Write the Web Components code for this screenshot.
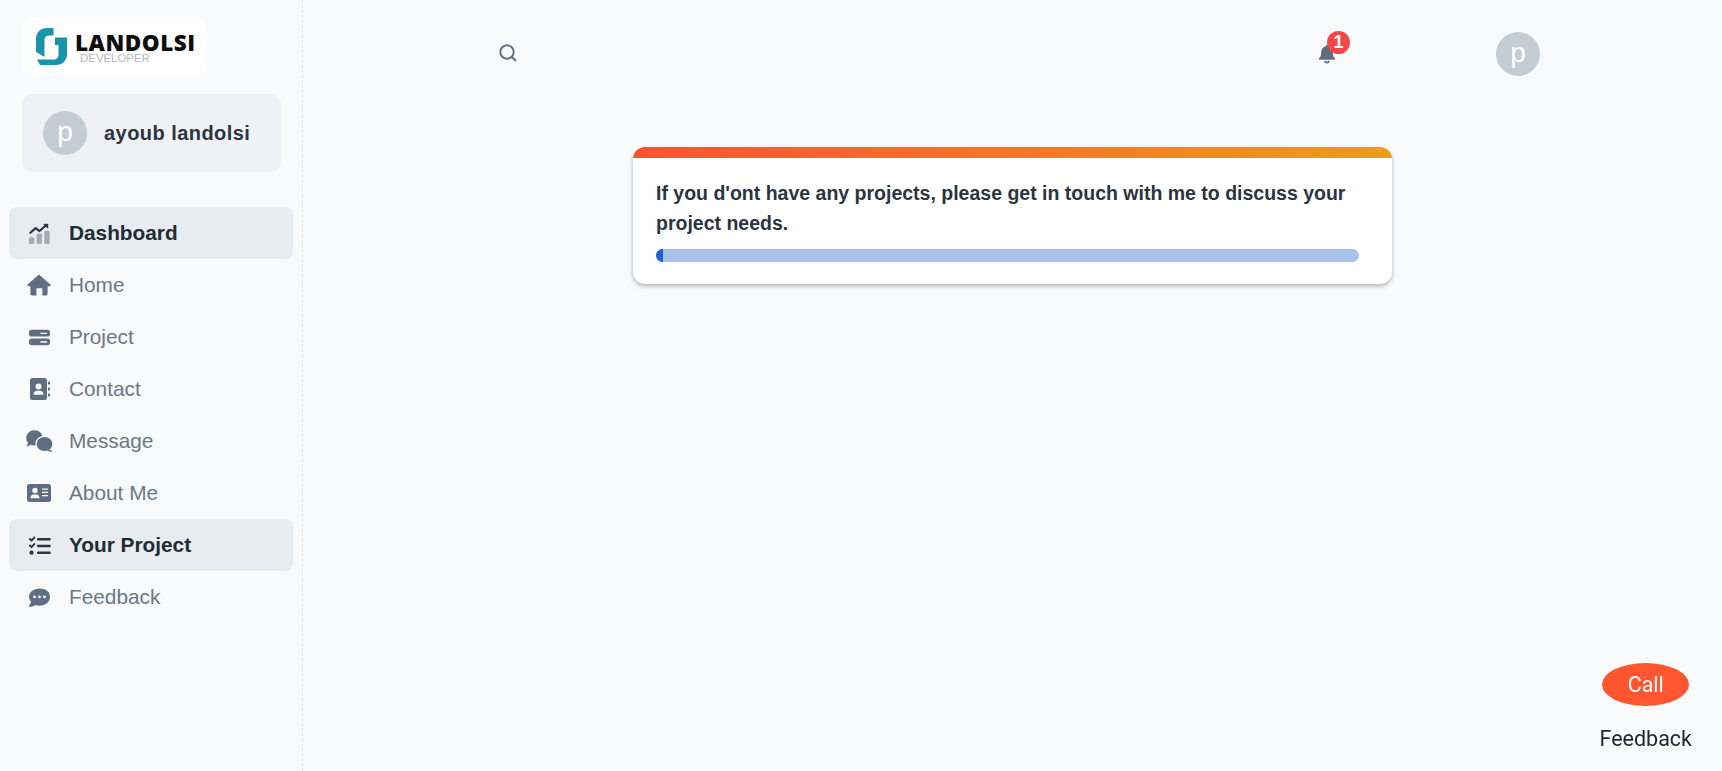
<!DOCTYPE html>
<html lang="en"><head><meta charset="utf-8"><title>Your Project</title>
<style>
html,body{margin:0;padding:0;height:100%;background:#f9fafb;overflow:hidden}
body{font-family:"Liberation Sans",Arial,sans-serif;color:#212b36}
</style></head><body>
<app-shell>
  <side-bar slot="side">
    <brand-logo></brand-logo>
    <user-chip name="ayoub landolsi"></user-chip>
    <nav-item active icon="chart">Dashboard</nav-item>
    <nav-item icon="home">Home</nav-item>
    <nav-item icon="server">Project</nav-item>
    <nav-item icon="contact">Contact</nav-item>
    <nav-item icon="comments">Message</nav-item>
    <nav-item icon="idcard">About Me</nav-item>
    <nav-item active icon="list">Your Project</nav-item>
    <nav-item icon="comment">Feedback</nav-item>
  </side-bar>
  <top-bar slot="top"></top-bar>
  <notice-card>If you d'ont have any projects, please get in touch with me to discuss your project needs.</notice-card>
</app-shell>
<call-widget></call-widget>
<script>
const ICONS={
chart:`<svg viewBox="0 0 24 24" width="23" height="23"><path d="M2.500 11.200 8 6.400l4 3 6.800-6" fill="none" stroke="#2b3440" stroke-width="2.300" stroke-linecap="round" stroke-linejoin="round"/><path d="M16.600 2.400h4v4z" fill="#2b3440" stroke="#2b3440" stroke-linejoin="round"/><g fill="#a5abb3"><rect x="1" y="16" width="5.600" height="7" rx="1.600"/><rect x="9" y="12" width="5.600" height="11" rx="1.600"/><rect x="17" y="9" width="5.600" height="14" rx="1.600"/></g></svg>`,
home:`<svg viewBox="0 0 24 24" width="24" height="24"><path fill="#5f6f81" d="M12 1.600.6 11.600c-.7.700-.3 1.600.6 1.600h2.200v7.600c0 .9.700 1.600 1.600 1.600h4.400v-6.200c0-.5.400-.9.900-.9h4.200c.5 0 .9.400.9.900v6.200H19c.9 0 1.600-.7 1.600-1.600v-7.600h2.200c.9 0 1.300-.9.600-1.600z"/></svg>`,
server:`<svg viewBox="0 0 24 24" width="23" height="23"><path fill="#5f6f81" fill-rule="evenodd" d="M4 4h16a3 3 0 0 1 3 3v1a3 3 0 0 1-3 3H4a3 3 0 0 1-3-3V7a3 3 0 0 1 3-3zm9 3v1.400h7V7zM4 13h16a3 3 0 0 1 3 3v1a3 3 0 0 1-3 3H4a3 3 0 0 1-3-3v-1a3 3 0 0 1 3-3zm9 3v1.400h7V16z"/></svg>`,
contact:`<svg viewBox="0 0 24 24" width="24" height="24"><path fill="#5f6f81" fill-rule="evenodd" d="M5.500 1h12A2.500 2.500 0 0 1 20 3.500v17a2.500 2.500 0 0 1-2.500 2.500h-12A2.500 2.500 0 0 1 3 20.500v-17A2.500 2.500 0 0 1 5.500 1zm6 5.500a3 3 0 1 0 0 6 3 3 0 0 0 0-6zM6.500 17.800h10c0-2.500-2-4-3.500-4h-3c-1.500 0-3.500 1.500-3.500 4z"/><g fill="#5f6f81"><rect x="21" y="4.500" width="2" height="3" rx=".6"/><rect x="21" y="10.500" width="2" height="3" rx=".6"/><rect x="21" y="16.500" width="2" height="3" rx=".6"/></g></svg>`,
comments:`<svg viewBox="0 0 27 22" width="27" height="22"><path fill="#5f6f81" d="M8.500.3C3.900.3.200 3.700.200 8c0 1.900.7 3.600 1.900 5-.3 1.200-1.100 2.400-1.700 3.300 1.700-.1 3.400-.7 4.700-1.600 1.100.5 2.200.8 3.400.8 4.600 0 8.300-3.200 8.300-7.500S13.100.3 8.500.3z"/><ellipse cx="18.500" cy="14" rx="8.500" ry="7.700" fill="#5f6f81" stroke="#f9fafb" stroke-width="1.200"/><path fill="#5f6f81" d="M23 19l3.800 2.800c-1.600.2-3.600-.2-5.800-1.300z"/></svg>`,
idcard:`<svg viewBox="0 0 24 20" width="24" height="20"><path fill="#5f6f81" fill-rule="evenodd" d="M2.500 1h19A2.500 2.500 0 0 1 24 3.500v13a2.500 2.500 0 0 1-2.500 2.500h-19A2.500 2.500 0 0 1 0 16.500v-13A2.500 2.500 0 0 1 2.500 1zM8 4.800a2.700 2.700 0 1 0 0 5.400 2.700 2.700 0 0 0 0-5.400zM3.400 15.300h9.200c0-2.300-1.500-3.900-3.300-3.900H6.700c-1.800 0-3.300 1.600-3.300 3.900zM15 5.500v1.300h6V5.500zm0 3.200V10h6V8.700zm0 3.200v1.300h6v-1.300z"/></svg>`,
list:`<svg viewBox="0 0 24 24" width="23" height="23"><g fill="none" stroke="#2b3440" stroke-width="2" stroke-linecap="round" stroke-linejoin="round"><path d="M2 5.200l1.700 1.700L6.700 3.500M2 12l1.700 1.700L6.700 10.400"/><path d="M10.500 5.500h12M10.500 12.500h12M10.500 19.500h12" stroke-width="2.500"/></g><circle cx="3.700" cy="19.500" r="2.200" fill="#2b3440"/></svg>`,
comment:`<svg viewBox="0 0 24 24" width="23" height="23"><path fill="#5f6f81" fill-rule="evenodd" d="M12 2.500C5.700 2.500 1 6.500 1 11.200c0 2 .9 3.900 2.300 5.300-.5 1.900-2 3.500-2.300 4.700-.1.400.2.800.7.800 2.600 0 4.700-1.100 6-2.100 1.300.4 2.800.6 4.300.6 6.300 0 11-3.900 11-9.300S18.300 2.500 12 2.500zM6.800 9.800a1.500 1.500 0 1 0 0 3 1.500 1.500 0 0 0 0-3zm5.200 0a1.500 1.500 0 1 0 0 3 1.500 1.500 0 0 0 0-3zm5.200 0a1.500 1.500 0 1 0 0 3 1.500 1.500 0 0 0 0-3z"/></svg>`
};
function def(name,html){
  customElements.define(name,class extends HTMLElement{
    constructor(){super();this.attachShadow({mode:'open'}).innerHTML=html(this)}
  });
}
def('app-shell',()=>`<style>
:host{display:grid;grid-template-columns:303px 1fr;grid-template-rows:auto 1fr;height:771px;width:1722px}
.side{grid-row:1/3}
main{display:flex;justify-content:flex-start;padding:0 0 0 330px}
</style>
<div class="side"><slot name="side"></slot></div>
<div><slot name="top"></slot></div>
<main><slot></slot></main>`);

def('side-bar',()=>`<style>
:host{display:flex;flex-direction:column;box-sizing:border-box;height:771px;padding:17px 9px 0 9px;border-right:1px dashed #dfe3e8}
</style><slot></slot>`);

def('brand-logo',()=>`<style>
:host{display:flex;align-items:center;box-sizing:border-box;width:185px;height:59px;margin:0 0 18px 13px;background:#fff;border-radius:12px;padding:0 0 0 14px;gap:8px}
svg{flex:none}
.t{display:flex;flex-direction:column;margin-top:2px}
b{font:800 22.500px/21px "Open Sans","Liberation Sans",sans-serif;color:#0d0d0d;letter-spacing:.5px;white-space:nowrap}
i{font:400 11.500px/9px "Liberation Sans",sans-serif;color:#b9b9b9;font-style:normal;margin:1px 0 0 5px;letter-spacing:-.05px}
</style>
<svg width="31" height="37" viewBox="0 0 31 37"><g fill="#1794ab">
<path d="M17.500 0v7.500H13C10 7.500 8.500 9 8.500 12v17L0 24V11C0 4.500 4.500 0 11 0z"/>
<path d="M19 9.500h12V26c0 6.500-4.500 11-11 11H4l-3-5.500h16c3.500 0 5.500-2 5.500-5V17H19z"/></g></svg>
<div class="t"><b>LANDOLSI</b><i>DEVELOPER</i></div>`);

def('user-chip',h=>`<style>
:host{display:flex;align-items:center;box-sizing:border-box;width:259px;height:78px;margin:0 0 35px 13px;background:#f0f1f4;border-radius:10px;padding:0 0 0 21px;gap:17px}
span{font:700 20px/24px "Liberation Sans",sans-serif;color:#2b3440;letter-spacing:.45px}
</style><av-atar></av-atar><span>${h.getAttribute('name')}</span>`);

def('av-atar',()=>`<style>
:host{display:flex;align-items:center;justify-content:center;width:44px;height:44px;flex:none;border-radius:50%;background:#c4cdd5;color:#fff;font:400 28px/44px "Liberation Sans",sans-serif}
span{margin-top:-2px}
</style><span>p</span>`);

def('nav-item',h=>{
  const a=h.hasAttribute('active');
  return `<style>
:host{display:flex;align-items:center;box-sizing:border-box;height:52px;width:284px;border-radius:8px;padding-left:16px;flex:none;
 ${a?'background:#e8ebef;':''}}
.i{width:28px;display:flex;justify-content:center;flex:none;margin-right:16px}
span{font:${a?700:400} 20.800px/24px "Liberation Sans",sans-serif;color:${a?'#212b36':'#6b7884'}}
</style><div class="i">${ICONS[h.getAttribute('icon')]}</div><span><slot></slot></span>`});

def('top-bar',()=>`<style>
:host{display:flex;align-items:center;box-sizing:border-box;height:107px;padding:0 0 0 195px}
.s{display:flex;margin-right:800px;margin-top:-1px}
.b{position:relative;display:flex;margin-right:160px}
em{position:absolute;left:9px;top:-13px;width:23px;height:23px;border-radius:50%;background:#f44848;color:#fff;font:700 18px/22px "Liberation Sans",sans-serif;text-align:center;font-style:normal}
</style>
<div class="s"><svg width="20" height="20" viewBox="0 0 20 20" fill="none" stroke="#5f6f81" stroke-width="1.900" stroke-linecap="round"><circle cx="9" cy="9" r="6.700"/><path d="M14 14l3.500 3.500"/></svg></div>
<div class="b"><svg width="18" height="20" viewBox="0 0 20 22"><path fill="#5f6f81" d="M10 1c-1 0-1.500.7-1.500 1.500C5.500 3.200 3.500 5.600 3.500 9c0 4-1 5.400-2.300 6.800-.6.700-.2 1.700.7 1.700h16.200c.9 0 1.300-1 .7-1.700C17.500 14.400 16.500 13 16.500 9c0-3.400-2-5.800-5-6.500C11.500 1.700 11 1 10 1zM7 18.500a3 3 0 0 0 6 0h-1.600a1.500 1.500 0 0 1-2.800 0z"/></svg><em>1</em></div>
<av-atar></av-atar>`);

def('notice-card',()=>`<style>
:host{display:block;box-sizing:border-box;width:759px;height:137px;margin-top:40px;background:#fff;border-radius:12px;overflow:hidden;box-shadow:0 2px 4px rgba(60,70,80,.4)}
.bar{height:11px;background:linear-gradient(90deg,#fb5230,#ee9b1c)}
.b{padding:20px 33px 0 23px}
p{margin:0;font:700 19.500px/30px "Liberation Sans",sans-serif;color:#2b3440}
.track{height:13px;margin-top:11px;border-radius:7px;background:#a8c2eb;overflow:hidden}
.track div{width:7px;height:100%;background:#2261d1}
</style><div class="bar"></div><div class="b"><p><slot></slot></p><div class="track"><div></div></div></div>`);

def('call-widget',()=>`<style>
:host{position:fixed;right:30px;bottom:17px;display:flex;flex-direction:column;align-items:center;gap:18px;font-family:Roboto,sans-serif}
.c{width:87px;height:43px;border-radius:50%;background:#ff5630;color:#fff;font:400 21.500px/43px Roboto,sans-serif;text-align:center}
.f{font:400 21.500px/30px Roboto,sans-serif;color:#1c2530}
</style><div class="c">Call</div><div class="f">Feedback</div>`);
</script>
</body></html>
